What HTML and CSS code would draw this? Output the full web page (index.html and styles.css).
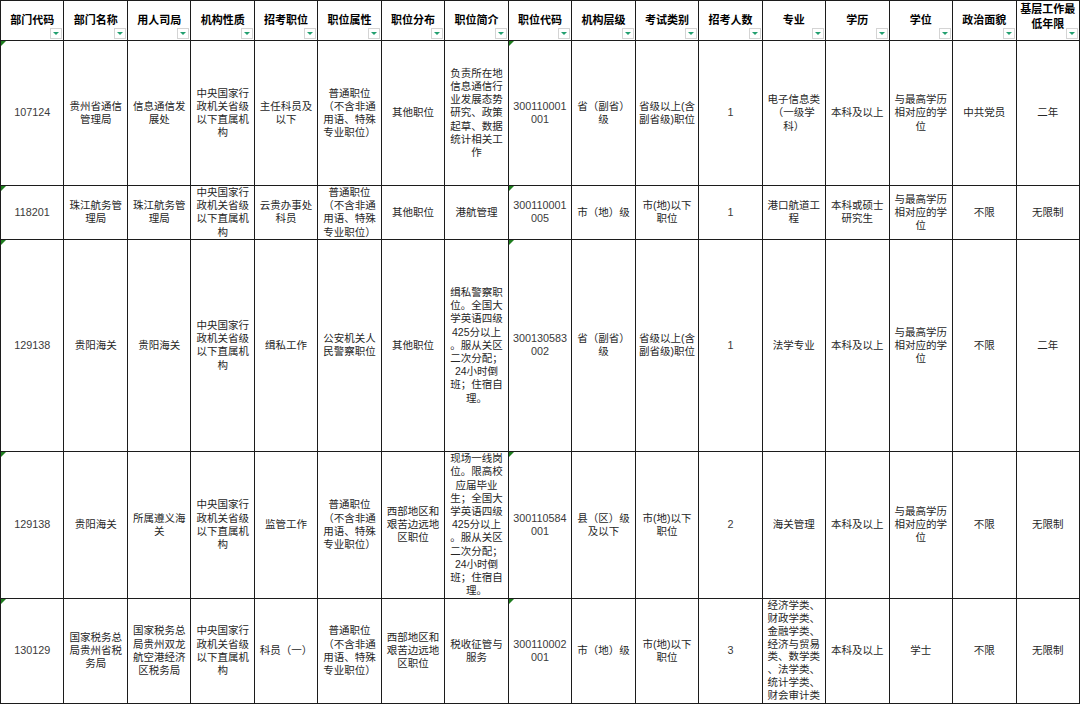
FILE: index.html
```html
<!DOCTYPE html>
<html lang="zh-CN">
<head>
<meta charset="utf-8">
<title>职位表</title>
<link rel="stylesheet" href="styles.css">
</head>
<body>
<div class="sheet">
<table class="grid">
<thead>
<tr class="r-head">
<th>部门代码<span class="filter"></span></th>
<th>部门名称<span class="filter"></span></th>
<th>用人司局<span class="filter"></span></th>
<th>机构性质<span class="filter"></span></th>
<th>招考职位<span class="filter"></span></th>
<th>职位属性<span class="filter"></span></th>
<th>职位分布<span class="filter"></span></th>
<th>职位简介<span class="filter"></span></th>
<th>职位代码<span class="filter"></span></th>
<th>机构层级<span class="filter"></span></th>
<th>考试类别<span class="filter"></span></th>
<th>招考人数<span class="filter"></span></th>
<th>专业<span class="filter"></span></th>
<th>学历<span class="filter"></span></th>
<th>学位<span class="filter"></span></th>
<th>政治面貌<span class="filter"></span></th>
<th class="th-top">基层工作最<br>低年限<span class="filter"></span></th>
</tr>
</thead>
<tbody>
<tr class="r1">
<td class="mark num">107124</td>
<td>贵州省通信<br>管理局</td>
<td>信息通信发<br>展处</td>
<td>中央国家行<br>政机关省级<br>以下直属机<br>构</td>
<td>主任科员及<br>以下</td>
<td>普通职位<br>（不含非通<br>用语、特殊<br>专业职位）</td>
<td>其他职位</td>
<td>负责所在地<br>信息通信行<br>业发展态势<br>研究、政策<br>起草、数据<br>统计相关工<br>作</td>
<td class="mark num">300110001<br>001</td>
<td>省（副省）<br>级</td>
<td>省级以上(含<br>副省级)职位</td>
<td class="num">1</td>
<td>电子信息类<br>（一级学<br>科）</td>
<td>本科及以上</td>
<td>与最高学历<br>相对应的学<br>位</td>
<td>中共党员</td>
<td>二年</td>
</tr>
<tr class="r2">
<td class="mark num">118201</td>
<td>珠江航务管<br>理局</td>
<td>珠江航务管<br>理局</td>
<td>中央国家行<br>政机关省级<br>以下直属机<br>构</td>
<td>云贵办事处<br>科员</td>
<td>普通职位<br>（不含非通<br>用语、特殊<br>专业职位）</td>
<td>其他职位</td>
<td>港航管理</td>
<td class="mark num">300110001<br>005</td>
<td>市（地）级</td>
<td>市(地)以下<br>职位</td>
<td class="num">1</td>
<td>港口航道工<br>程</td>
<td>本科或硕士<br>研究生</td>
<td>与最高学历<br>相对应的学<br>位</td>
<td>不限</td>
<td>无限制</td>
</tr>
<tr class="r3">
<td class="mark num">129138</td>
<td>贵阳海关</td>
<td>贵阳海关</td>
<td>中央国家行<br>政机关省级<br>以下直属机<br>构</td>
<td>缉私工作</td>
<td>公安机关人<br>民警察职位</td>
<td>其他职位</td>
<td>缉私警察职<br>位。全国大<br>学英语四级<br>425分以上<br>。服从关区<br>二次分配；<br>24小时倒<br>班；住宿自<br>理。</td>
<td class="mark num">300130583<br>002</td>
<td>省（副省）<br>级</td>
<td>省级以上(含<br>副省级)职位</td>
<td class="num">1</td>
<td>法学专业</td>
<td>本科及以上</td>
<td>与最高学历<br>相对应的学<br>位</td>
<td>不限</td>
<td>二年</td>
</tr>
<tr class="r4">
<td class="mark num">129138</td>
<td>贵阳海关</td>
<td>所属遵义海<br>关</td>
<td>中央国家行<br>政机关省级<br>以下直属机<br>构</td>
<td>监管工作</td>
<td>普通职位<br>（不含非通<br>用语、特殊<br>专业职位）</td>
<td>西部地区和<br>艰苦边远地<br>区职位</td>
<td>现场一线岗<br>位。限高校<br>应届毕业<br>生；全国大<br>学英语四级<br>425分以上<br>。服从关区<br>二次分配；<br>24小时倒<br>班；住宿自<br>理。</td>
<td class="mark num">300110584<br>001</td>
<td>县（区）级<br>及以下</td>
<td>市(地)以下<br>职位</td>
<td class="num">2</td>
<td>海关管理</td>
<td>本科及以上</td>
<td>与最高学历<br>相对应的学<br>位</td>
<td>不限</td>
<td>无限制</td>
</tr>
<tr class="r5">
<td class="mark num">130129</td>
<td>国家税务总<br>局贵州省税<br>务局</td>
<td>国家税务总<br>局贵州双龙<br>航空港经济<br>区税务局</td>
<td>中央国家行<br>政机关省级<br>以下直属机<br>构</td>
<td>科员（一）</td>
<td>普通职位<br>（不含非通<br>用语、特殊<br>专业职位）</td>
<td>西部地区和<br>艰苦边远地<br>区职位</td>
<td>税收征管与<br>服务</td>
<td class="mark num">300110002<br>001</td>
<td>市（地）级</td>
<td>市(地)以下<br>职位</td>
<td class="num">3</td>
<td class="overflow"><div class="clip">经济学类、<br>财政学类、<br>金融学类、<br>经济与贸易<br>类、数学类<br>、法学类、<br>统计学类、<br>财会审计类</div></td>
<td>本科及以上</td>
<td>学士</td>
<td>不限</td>
<td>无限制</td>
</tr>
</tbody>
</table>
</div>
</body>
</html>
```

FILE: styles.css
```css
html, body {
  margin: 0;
  padding: 0;
  background: #ffffff;
}

.sheet {
  width: 1080px;
  height: 704px;
  overflow: hidden;
}

.grid {
  width: 1080px;
  table-layout: fixed;
  border-collapse: collapse;
  font-family: "Liberation Sans", "Noto Sans CJK SC", sans-serif;
  font-size: 10.5px;
  color: #262626;
}

.grid th,
.grid td {
  border: 1px solid #1c1c1c;
  padding: 0 1px;
  text-align: center;
  vertical-align: middle;
  white-space: nowrap;
  overflow: hidden;
  position: relative;
  line-height: 13.2px;
}

.grid th {
  font-family: "Noto Sans CJK SC", sans-serif;
  font-size: 11px;
  font-weight: bold;
  color: #000;
  padding-bottom: 2px;
}

.grid th.th-top {
  vertical-align: top;
  line-height: 15px;
  padding-top: 0;
}

.r-head { height: 40px; }
.r1 { height: 145px; }
.r2 { height: 53px; }
.r3 { height: 212px; }
.r4 { height: 147px; }
.r5 { height: 105px; }

.num {
  font-size: 10.8px;
  color: #3a3a3a;
}

.filter {
  position: absolute;
  right: 1px;
  bottom: 1px;
  width: 10px;
  height: 9px;
  border: 1px solid #d4d4d4;
  background: #fff;
}

.filter::after {
  content: "";
  position: absolute;
  left: 2px;
  top: 3px;
  border-left: 3px solid transparent;
  border-right: 3px solid transparent;
  border-top: 3px solid #23a070;
}

.mark::before {
  content: "";
  position: absolute;
  left: 0;
  top: 0;
  border-top: 5px solid #1e7d1e;
  border-right: 5px solid transparent;
}

.overflow {
  vertical-align: top;
  text-align: left;
  padding-left: 3px;
}

.clip {
  height: 104px;
  line-height: 12.9px;
  overflow: hidden;
}
```
